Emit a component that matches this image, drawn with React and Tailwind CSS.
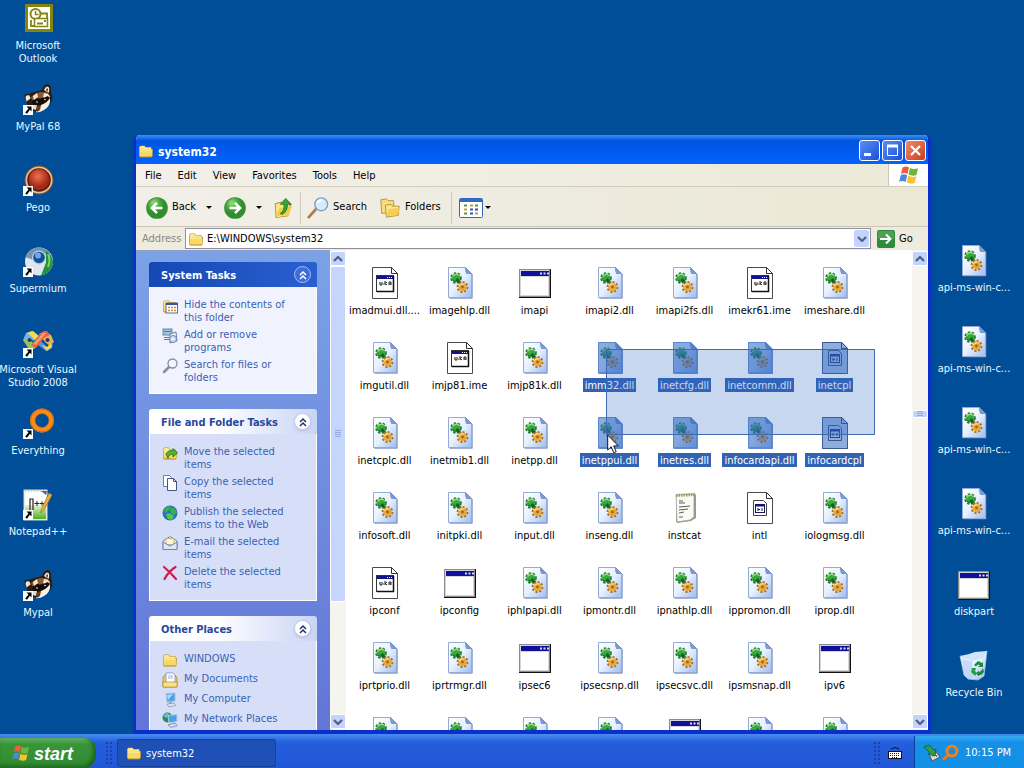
import { useState } from 'react';

const DESKTOP_LEFT = [
  { icon: 'outlook', lines: ['Microsoft', 'Outlook'] },
  { icon: 'raccoon', lines: ['MyPal 68'] },
  { icon: 'pego', lines: ['Pego'] },
  { icon: 'supermium', lines: ['Supermium'] },
  { icon: 'vs', lines: ['Microsoft Visual', 'Studio 2008'] },
  { icon: 'everything', lines: ['Everything'] },
  { icon: 'npp', lines: ['Notepad++'] },
  { icon: 'raccoon', lines: ['Mypal'] },
];

const DESKTOP_RIGHT = [
  { icon: 'dll', lines: ['api-ms-win-c...'] },
  { icon: 'dll', lines: ['api-ms-win-c...'] },
  { icon: 'dll', lines: ['api-ms-win-c...'] },
  { icon: 'dll', lines: ['api-ms-win-c...'] },
  { icon: 'exe', lines: ['diskpart'] },
  { icon: 'bin', lines: ['Recycle Bin'] },
];

const FILES = [
  ['imadmui.dll....', 'conf'], ['imagehlp.dll', 'dll'], ['imapi', 'exe'], ['imapi2.dll', 'dll'], ['imapi2fs.dll', 'dll'], ['imekr61.ime', 'conf'], ['imeshare.dll', 'dll'],
  ['imgutil.dll', 'dll'], ['imjp81.ime', 'conf'], ['imjp81k.dll', 'dll'], ['imm32.dll', 'dll', true], ['inetcfg.dll', 'dll', true], ['inetcomm.dll', 'dll', true], ['inetcpl', 'cpl', true],
  ['inetcplc.dll', 'dll'], ['inetmib1.dll', 'dll'], ['inetpp.dll', 'dll'], ['inetppui.dll', 'dll', true], ['inetres.dll', 'dll', true], ['infocardapi.dll', 'dll', true], ['infocardcpl', 'cpl', true],
  ['infosoft.dll', 'dll'], ['initpki.dll', 'dll'], ['input.dll', 'dll'], ['inseng.dll', 'dll'], ['instcat', 'text'], ['intl', 'cpl'], ['iologmsg.dll', 'dll'],
  ['ipconf', 'conf'], ['ipconfig', 'exe'], ['iphlpapi.dll', 'dll'], ['ipmontr.dll', 'dll'], ['ipnathlp.dll', 'dll'], ['ippromon.dll', 'dll'], ['iprop.dll', 'dll'],
  ['iprtprio.dll', 'dll'], ['iprtrmgr.dll', 'dll'], ['ipsec6', 'exe'], ['ipsecsnp.dll', 'dll'], ['ipsecsvc.dll', 'dll'], ['ipsmsnap.dll', 'dll'], ['ipv6', 'exe'],
  ['', 'dll'], ['', 'dll'], ['', 'dll'], ['', 'dll'], ['', 'exe'], ['', 'dll'], ['', 'dll'],
];

const PANELS = [
  {
    title: 'System Tasks',
    primary: true,
    items: [
      ['hide', 'Hide the contents of', 'this folder'],
      ['programs', 'Add or remove', 'programs'],
      ['search', 'Search for files or', 'folders'],
    ],
  },
  {
    title: 'File and Folder Tasks',
    items: [
      ['move', 'Move the selected', 'items'],
      ['copy', 'Copy the selected', 'items'],
      ['globe', 'Publish the selected', 'items to the Web'],
      ['mail', 'E-mail the selected', 'items'],
      ['delete', 'Delete the selected', 'items'],
    ],
  },
  {
    title: 'Other Places',
    items: [
      ['folder', 'WINDOWS'],
      ['docs', 'My Documents'],
      ['computer', 'My Computer'],
      ['network', 'My Network Places'],
    ],
  },
];

const MENU = ['File', 'Edit', 'View', 'Favorites', 'Tools', 'Help'];

function Gears() {
  return (
    <>
      <circle cx="12" cy="11" r="4.600" fill="none" stroke="#1d7a2c" strokeWidth="2.400" strokeDasharray="2.200 1.600" />
      <circle cx="12" cy="11" r="4.400" fill="#3aa83c" />
      <path d="M8.500 9.500Q11 6 15 8" stroke="#8be07a" strokeWidth="1.500" fill="none" />
      <path d="M12.500 12l4 4.500" stroke="#12602a" strokeWidth="3" />
      <path d="M9 13l2.500 1.500" stroke="#1a6d2c" strokeWidth="1.200" />
      <circle cx="18.500" cy="20" r="4.700" fill="none" stroke="#a8701c" strokeWidth="2.400" strokeDasharray="2 1.600" />
      <circle cx="18.500" cy="20" r="4.300" fill="#eba73a" />
      <circle cx="18.500" cy="20" r="1.400" fill="#8c6a34" />
      <path d="M15 19q2-3 5-2" stroke="#ffd777" strokeWidth="1.300" fill="none" />
    </>
  );
}

function DllIcon({ selected }) {
  return (
    <>
      <path d="M5.500 1.500h17l6 6v24h-23z" fill="#4f69ad" />
      <path d="M4.500.500h17l6 6v24h-23z" fill="url(#paper)" stroke="#93abd6" />
      <path d="M21.500.500l6 6h-5q-1-2-1-6z" fill="#7c9ad6" stroke="#6d88c4" strokeWidth=".8" />
      <Gears />
      {selected && <path d="M4 0h18l7 7v25H4z" fill="#316ac5" opacity=".55" />}
    </>
  );
}

function ConfIcon() {
  return (
    <>
      <path d="M3.500.500h19l6 6v25h-25z" fill="#fff" stroke="#4a4a4a" />
      <path d="M22.500.500v6h6z" fill="#fff" stroke="#333" />
      <rect x="7.500" y="8.500" width="17" height="16" fill="#fff" stroke="#333" />
      <path d="M24.500 9v15.500H8" fill="none" stroke="#111" strokeWidth="1.500" />
      <rect x="8" y="9" width="16" height="3" fill="#12128c" />
      <path d="M18 10.500h1M20 10.500h1M22 10.500h1" stroke="#fff" />
      <path d="M11 15v3h2v-3M16 14v4M18 15l-2 1.500 2 1.500M20 18v-3h2v3M20 17h2" stroke="#222" fill="none" />
      <path d="M10 16h1M14 17h1" stroke="#b02020" />
    </>
  );
}

function CplIcon({ selected }) {
  return (
    <>
      <path d="M3.500.500h19l6 6v25h-25z" fill="#fff" stroke="#4a4a4a" />
      <path d="M22.500.500v6h6z" fill="#fff" stroke="#333" />
      <path d="M9.500 8.500h10l3 3v12h-13z" fill="#fff" stroke="#444" />
      <rect x="11.500" y="12.500" width="9" height="8" fill="#fff" stroke="#17175e" />
      <path d="M11 13.500h10" stroke="#12128c" strokeWidth="2" />
      <path d="M14 16v3M14 17.500h2M18 16v3" stroke="#17175e" />
      {selected && <path d="M3 0h20l6 6v26H3z" fill="#316ac5" opacity=".55" />}
    </>
  );
}

function ExeIcon() {
  return (
    <>
      <rect x="0" y="2" width="32" height="29" fill="#111" />
      <rect x="0" y="2" width="31" height="28" fill="#8b8b8b" />
      <rect x="1" y="3" width="29" height="26" fill="#d6d6d6" />
      <rect x="2" y="4" width="28" height="5" fill="#10109c" />
      <rect x="2" y="10" width="27" height="18" fill="#fff" />
      <path d="M21 6.500h2M24.500 6.500h2M28 6.500h2" stroke="#dcdcdc" strokeWidth="2" />
    </>
  );
}

function TextIcon() {
  return (
    <>
      <path d="M8 3l18-1 1 1v23l-5 3-14 2-1-2z" fill="#9a9a92" />
      <path d="M7 3l18-1v23l-4 3-13 2z" fill="#fbfbf6" stroke="#9b9b90" strokeWidth=".8" />
      <path d="M7 3.500l19-1" stroke="#9d9762" strokeWidth="3" strokeDasharray="1.500 1" />
      <path d="M10 9h4M10 11h6M10 15l11-1M10 18l9-1M10 21l5-1M10 25h4" stroke="#5c5c5c" />
    </>
  );
}

function Raccoon() {
  return (
    <>
      <path d="M3 15q-2-6 4-5l5-2 8-2q2-6 6-6 4 2 3 8 3 7-1 12-5 6-13 8-8-1-10-9z" fill="#2e1b12" />
      <path d="M3.500 13.500q0-3 4-2l1 3-4 3z" fill="#efe6d8" />
      <path d="M22 6q2-5 4.500-3 1.500 2 0 6z" fill="#f1e9dd" />
      <path d="M24 6q1-3 2-1l-.500 3z" fill="#59311d" />
      <path d="M9 13q6-5 11-5 4 0 7 2l-4 3-7 2-6 1z" fill="#8a5a38" />
      <path d="M11 12l4-3 1 4-4 3z" fill="#f3e7d3" />
      <path d="M22 9q5 0 6 4l-3 2-4-2z" fill="#f3e7d3" />
      <path d="M10 18l5-4 4 1 7-3 2 3-5 5-6 2-5 2z" fill="#140c08" />
      <path d="M19 21q6-2 9-7 1 8-6 12-5 3-8 2z" fill="#f8f1e4" />
      <path d="M10 21l5 0-1 5-3-1z" fill="#e9dbc4" />
      <circle cx="15" cy="18" r=".8" fill="#fff" />
      <circle cx="23" cy="15.500" r=".8" fill="#fff" />
      <path d="M15 22l4-1-1 5-3 2z" fill="#6b3a20" />
    </>
  );
}

function ShortcutArrow() {
  return (
    <>
      <rect x="1" y="21" width="10" height="10" fill="#fff" />
      <path d="M4.500 22.500h5v5l-1.700-1.700-2.800 4-1.800-1.400 3.300-4z" fill="#000" />
    </>
  );
}

function BigIcon({ name, selected }) {
  const shortcut = ['raccoon', 'pego', 'supermium', 'vs', 'everything', 'npp'].includes(name);
  return (
    <svg width="32" height="32" viewBox="0 0 32 32" aria-hidden="true" className="block shrink-0">
      {name === 'dll' && <DllIcon selected={selected} />}
      {name === 'conf' && <ConfIcon />}
      {name === 'cpl' && <CplIcon selected={selected} />}
      {name === 'exe' && <ExeIcon />}
      {name === 'text' && <TextIcon />}
      {name === 'raccoon' && <Raccoon />}
      {name === 'outlook' && (
        <>
          <rect x="3" y="1" width="28" height="28" fill="#85840f" />
          <rect x="6" y="4" width="22" height="22" fill="#fff" />
          <circle cx="13.500" cy="11" r="5" fill="#fff" stroke="#85840f" strokeWidth="2" />
          <path d="M13.500 8v3.500h3" stroke="#85840f" strokeWidth="1.500" fill="none" />
          <path d="M9 17v6h4M19 10.500h6V15" fill="none" stroke="#85840f" strokeWidth="1.800" />
          <rect x="12.500" y="15.500" width="13" height="8" fill="#fff" stroke="#85840f" strokeWidth="1.500" />
          <path d="M15 20.500h6M22 18h2" stroke="#85840f" strokeWidth="1.800" />
        </>
      )}
      {name === 'pego' && (
        <>
          <circle cx="17" cy="15" r="14.500" fill="#7b4a2c" />
          <circle cx="17" cy="15" r="13.500" fill="#e3c095" />
          <circle cx="17" cy="15" r="11.800" fill="#5b1a0e" />
          <circle cx="17" cy="14.500" r="10.500" fill="url(#redball)" />
        </>
      )}
      {name === 'supermium' && (
        <>
          <circle cx="17" cy="15.500" r="14" fill="#dfe6ee" />
          <path d="M3.500 11Q8 1 18 1.500q8 1 11 7l-13 0-6 5z" fill="#6f93b4" />
          <path d="M24 5q7 4 7 12-2 11-12 12.500l5-13z" fill="#23913b" />
          <path d="M26 8q3 6 0 13" stroke="#7ad46d" strokeWidth="2" fill="none" />
          <circle cx="17" cy="11.500" r="7" fill="#b9d2e6" />
          <circle cx="17" cy="11.500" r="5.800" fill="#14509c" />
          <circle cx="16" cy="9.500" r="3" fill="#70a9e5" />
        </>
      )}
      {name === 'vs' && (
        <>
          <path d="M1 13l3-7 6-2 6 5-4 5-4-2-3 4z" fill="#77aef0" />
          <path d="M5 6l6-2 6 5-4 4-4-4z" fill="#f0dd4d" />
          <path d="M1 13l5 8 6 1 4-4-6-3-3-4z" fill="#9ac34f" />
          <path d="M17 7l6-3 6 4 3 7-4 4-5-4z" fill="#f2b04a" />
          <path d="M19 14l6 6 6-5-1 6-6 3-8-6z" fill="#5c92e0" />
          <path d="M20 18l5 2 4-4 1 4-5 4z" fill="#f3d84c" />
          <path d="M9 18L20 5l5-1 3 4-6 3-8 10z" fill="#e9633a" />
          <path d="M11 17L21 6l3 0-10 12z" fill="#f69a72" />
          <circle cx="7.500" cy="13" r="2" fill="#123c80" />
          <circle cx="25.500" cy="13" r="2" fill="#123c80" />
        </>
      )}
      {name === 'everything' && (
        <>
          <circle cx="20" cy="12.500" r="9.500" fill="none" stroke="#ff8a14" strokeWidth="5" />
          <circle cx="20" cy="12.500" r="11.500" fill="none" stroke="#c76a18" />
          <circle cx="20" cy="12.500" r="7" fill="none" stroke="#c76a18" strokeWidth=".8" />
        </>
      )}
      {name === 'npp' && (
        <>
          <rect x="2" y="1" width="23" height="30" fill="#fff" stroke="#cfd8cf" />
          <rect x="3" y="16" width="21" height="14" fill="url(#grass)" />
          <path d="M3 2h20" stroke="#aab" strokeDasharray="1.500 1.500" />
          <path d="M8 21V10h3v11" stroke="#222" fill="none" strokeWidth="1.200" />
          <path d="M12.500 14.500h5M15 12v5M18 14.500h4M20 12.500v4" stroke="#222" />
          <path d="M19 21L27 4l3 2-8 15-3 3z" fill="#e9b13b" stroke="#9b7423" strokeWidth=".7" />
          <path d="M19 2h6l-1 4z" fill="#5560a8" />
        </>
      )}
      {name === 'bin' && (
        <>
          <path d="M2 6l12 4L29 1l-3 25-6 4-10-1-4-4z" fill="url(#paper)" stroke="#9cc0ea" strokeWidth=".8" />
          <path d="M2 6l9-2 6-2 12-1-4 7-11 3z" fill="#cfe4fa" />
          <path d="M4 8.500l10 3 1 18-5-1-4-3z" fill="#b3d0f4" opacity=".7" />
          <path d="M16 15l4-4 4 2 1-1v5h-5l2-1.500-2-1-2 2z" fill="#1e8a3a" />
          <path d="M14 18h4l-1 3 2 2-2 3-4-4z" fill="#2a9d48" />
          <path d="M25 18l1 4-3 3h-2v1.500l-3-3 3-3V22l2-1z" fill="#1e8a3a" />
        </>
      )}
      {shortcut && <ShortcutArrow />}
    </svg>
  );
}

function FolderShape() {
  return (
    <>
      <path d="M1 4l1.500-1.500h4L8 4h5.500v2H15l-.500 7.500-1 1H2L1 13z" fill="#b58a1f" />
      <path d="M1.500 4.200L2.700 3h3.600l1.400 1.500H13v2H1.500z" fill="#ffe98f" />
      <path d="M1.500 6.500h12.800v6.200L13 13.500H2.200l-.700-.700z" fill="#f9d866" />
      <path d="M2 7h11.500" stroke="#fff6c2" />
    </>
  );
}

function SmallIcon({ name }) {
  return (
    <svg viewBox="0 0 16 16" aria-hidden="true" className="block size-4 shrink-0">
      {name === 'folder' && <FolderShape />}
      {name === 'hide' && (
        <>
          <FolderShape />
          <rect x="4" y="5" width="11.500" height="10" fill="#fff" stroke="#5a6c94" />
          <path d="M4 6h11.500" stroke="#39539b" strokeWidth="2" />
          <path d="M6 9.500h2M9 9.500h2M12 9.500h2M6 12.500h2M9 12.500h2M12 12.500h2" stroke="#d08a4b" strokeWidth="1.500" />
        </>
      )}
      {name === 'programs' && (
        <>
          <rect x="1" y="1" width="9" height="6" fill="#9cc4da" stroke="#6689a4" />
          <path d="M2 3.500h7M2 9.500h6M2 11.500h6" stroke="#4f7f9d" />
          <path d="M8 6l6-2 1 9-7 2z" fill="#e6eefa" stroke="#6a82ad" />
          <circle cx="11" cy="11" r="3.500" fill="#cfdcf5" stroke="#7488b4" />
          <circle cx="11" cy="11" r="1" fill="#fff" />
        </>
      )}
      {name === 'search' && (
        <>
          <path d="M2 14l5-5" stroke="#8c8a96" strokeWidth="2.500" strokeLinecap="round" />
          <circle cx="10.500" cy="5.500" r="4.500" fill="#eef6ff" stroke="#848da6" strokeWidth="1.300" />
          <path d="M8.500 4.500q1-2 3-1.500" stroke="#fff" fill="none" />
        </>
      )}
      {name === 'move' && (
        <>
          <FolderShape />
          <path d="M4 9q3-5 7-3V3.500l4.500 4.500-4.500 4V9.500q-4-1-5 4z" fill="#52b52d" stroke="#1f6d16" strokeWidth=".8" />
        </>
      )}
      {name === 'copy' && (
        <>
          <path d="M1.500.500h6l2 2v9h-8z" fill="#fff" stroke="#6c7fa8" />
          <path d="M5.500 3.500h6l3 3v9h-9z" fill="#fff" stroke="#40587f" />
          <path d="M11.500 3.500v3h3" fill="none" stroke="#40587f" />
        </>
      )}
      {name === 'globe' && (
        <>
          <circle cx="8" cy="8" r="7.500" fill="#2d6fb9" />
          <path d="M1.500 5q3-4 7-4l-1 4-4 3zM9 2l4 2 2 4-4 2-3-4z" fill="#3cae46" />
          <path d="M4 9l4-1 4 3-2 4-4-1z" fill="#4fc94a" />
        </>
      )}
      {name === 'mail' && (
        <>
          <path d="M1 6l7-4.500 7 4.500v8.500H1z" fill="#fbf6ea" stroke="#7486ae" />
          <path d="M4 3.500h8v6H4z" fill="#fff6d6" stroke="#b39c68" strokeWidth=".7" />
          <path d="M1 7l7 4 7-4v7.500H1z" fill="#dce6f8" stroke="#7486ae" />
        </>
      )}
      {name === 'delete' && <path d="M2 2q6 5 12 12M13.500 2Q7 6 2.500 14" stroke="#c9204a" strokeWidth="2.200" fill="none" strokeLinecap="round" />}
      {name === 'docs' && (
        <>
          <path d="M1 5l2-2h10l2 3v9H1z" fill="#f3cf5c" stroke="#a9821e" strokeWidth=".8" />
          <path d="M4 1h7l2 2v8H4z" fill="#fff" stroke="#7e8fb5" strokeWidth=".8" />
          <path d="M6 4h5M6 6h5" stroke="#9db0d8" />
          <path d="M1 10h14v5H1z" fill="#fbe08a" stroke="#a9821e" strokeWidth=".6" />
        </>
      )}
      {name === 'computer' && (
        <>
          <path d="M4 1.500l9-.500v8l-8 1z" fill="#49a4ea" stroke="#b2bfd6" />
          <path d="M5 3l6-1-5 6z" fill="#a8dcff" />
          <path d="M7 10h3v2H7z" fill="#8ea0bf" />
          <path d="M5 12l7-1 2 2.500L7 15z" fill="#dbe3f0" stroke="#8497bb" strokeWidth=".7" />
        </>
      )}
      {name === 'network' && (
        <>
          <circle cx="5.500" cy="5.500" r="5" fill="#2f8a54" />
          <path d="M1 4q4-4 6-3l-2 5z" fill="#69b6e8" />
          <path d="M6 3.500l9-1v7l-8 1.500z" fill="#40a5ea" stroke="#c1cbe0" />
          <path d="M6 13l7-2 2 2.500-6 2z" fill="#dbe3f0" stroke="#60749e" strokeWidth=".7" />
        </>
      )}
    </svg>
  );
}

function Flag({ className }) {
  return (
    <svg viewBox="0 0 20 18" aria-hidden="true" className={`block shrink-0 ${className}`}>
      <path d="M3.500 1.500Q7-.500 10 1.500L8.500 8Q5.500 6.200 2 8z" fill="#e8613a" />
      <path d="M11 2q3.500 2 8 .300L17.500 9q-4 1.500-8-.500z" fill="#6fb53c" />
      <path d="M1.700 9.200Q5 7.500 8.200 9.300L6.700 16Q3.500 14 .200 15.700z" fill="#4f86e0" />
      <path d="M9.200 9.800q4 2 8 .500L15.800 17q-4 1.500-8-.500z" fill="#f5c32f" />
    </svg>
  );
}

function Chevron({ dir }) {
  return (
    <svg viewBox="0 0 10 6" aria-hidden="true" className="block h-1.5 w-2.5">
      <path d={dir === 'up' ? 'M1 5l4-4 4 4' : 'M1 1l4 4 4-4'} fill="none" stroke="#4d6185" strokeWidth="2.200" />
    </svg>
  );
}

function ScrollBar({ children }) {
  const button = 'flex h-[15px] w-full shrink-0 items-center justify-center rounded-xs border border-white bg-[#c3d3fb]';
  return (
    <div className="flex w-4 shrink-0 flex-col bg-[#f5f4ef] py-px">
      <button type="button" aria-label="Scroll up" className={button}><Chevron dir="up" /></button>
      <div className="flex min-h-0 flex-1 flex-col">{children}</div>
      <button type="button" aria-label="Scroll down" className={button}><Chevron dir="down" /></button>
    </div>
  );
}

function Grip() {
  return (
    <div className="flex flex-col gap-px">
      {[0, 1, 2, 3].map(i => <span key={i} className="h-px w-1.5 bg-[#93a9de]" />)}
    </div>
  );
}

function DropArrow() {
  return (
    <span className="flex h-3 items-center">
      <span className="size-0 border-x-[3px] border-t-[3px] border-x-transparent border-t-black" />
    </span>
  );
}

function RoundArrow({ flip }) {
  return (
    <svg viewBox="0 0 24 24" aria-hidden="true" className="block size-[22px]">
      <circle cx="12" cy="12" r="11.800" fill="#3b8a38" />
      <circle cx="12" cy="12" r="10.800" fill="url(#greenball)" />
      <path d={flip ? 'M6 12h11M12 6.500l5.500 5.500-5.500 5.500' : 'M18 12H7M12 6.500L6.500 12l5.500 5.500'} fill="none" stroke="#fff" strokeWidth="2.800" />
    </svg>
  );
}

function TaskPanel({ panel }) {
  const [open, setOpen] = useState(true);
  return (
    <section>
      <h2 className={`flex h-[25px] items-center justify-between rounded-t-[3px] pr-1.5 pl-3 font-bold ${panel.primary ? 'bg-linear-to-r from-[#1548b4] to-[#2a5fd0] text-white' : 'bg-linear-to-r from-white from-40% to-[#c9d4f6] text-[#27479c]'}`}>
        <span className="pt-1">{panel.title}</span>
        <button type="button" aria-label={`Toggle ${panel.title}`} aria-expanded={open} onClick={() => setOpen(!open)}
          className={`flex size-[17px] items-center justify-center rounded-full border ${panel.primary ? 'border-[#a9c1f3] bg-[#3d6dd6]' : 'border-[#c3cce4] bg-white shadow-sm'}`}>
          <svg viewBox="0 0 10 10" aria-hidden="true" className="block size-2.5">
            <path d="M2 5l3-3 3 3M2 9l3-3 3 3" fill="none" stroke={panel.primary ? '#fff' : '#203070'} strokeWidth="1.500" />
          </svg>
        </button>
      </h2>
      {open && (
        <ul className={`flex flex-col gap-1 border border-t-0 border-white px-3 pt-[11px] pb-[9px] ${panel.primary ? 'bg-[#f0f3fd]' : 'bg-[#d6dff7]'}`}>
          {panel.items.map(([icon, ...lines]) => (
            <li key={icon}>
              <a href="#" className="flex gap-1.5 leading-[13px] text-[#3a5fb4]">
                <SmallIcon name={icon} />
                <span>{lines.map(l => <span key={l} className="block whitespace-nowrap">{l}</span>)}</span>
              </a>
            </li>
          ))}
        </ul>
      )}
    </section>
  );
}

function DesktopItem({ item }) {
  return (
    <button type="button" className="flex h-[81px] w-full flex-col items-center gap-1 leading-[13px] text-[#eaf8ff]">
      <BigIcon name={item.icon} />
      <span>{item.lines.map(l => <span key={l} className="block whitespace-nowrap">{l}</span>)}</span>
    </button>
  );
}

function FileItem({ file: [name, icon, selected] }) {
  return (
    <button type="button" className="flex h-[75px] flex-col items-center gap-1 leading-[13px]">
      <BigIcon name={icon} selected={selected} />
      {name && <span className={`whitespace-nowrap px-0.5 pt-px ${selected ? 'bg-[#3162b4] text-white' : 'text-black'}`}>{name}</span>}
    </button>
  );
}

function Toolbar() {
  return (
    <div className="flex h-10 shrink-0 items-center border-b border-[#c9c6b5] bg-linear-to-r from-[#f1efe8] to-[#ebe8d6] pt-0.5 pl-2.5">
      <button type="button" className="flex items-center gap-1"><RoundArrow />Back</button>
      <button type="button" aria-label="Back history" className="px-2.5 py-2"><DropArrow /></button>
      <button type="button" aria-label="Forward" className="ml-0.5"><RoundArrow flip /></button>
      <button type="button" aria-label="Forward history" className="py-2 pr-2 pl-2.5"><DropArrow /></button>
      <button type="button" aria-label="Up" className="ml-0.5">
        <svg viewBox="0 0 24 24" aria-hidden="true" className="block size-[22px]">
          <path d="M3 7l7-2 2 2h9l-3 14-14 2z" fill="#b58f2c" />
          <path d="M4 8l6-2 2 2h7v12l-14 2z" fill="#fbe68c" />
          <path d="M4 21l4-9 14-2-4 10z" fill="#f3ce4e" />
          <path d="M9 18q5-3 4-10H9l6-6.500L21 8h-4q0 8-6 11z" fill="#38a52e" stroke="#1c6e1b" strokeWidth=".8" />
        </svg>
      </button>
      <span className="mx-1.5 h-8 w-px bg-[#cbc8b8]" />
      <button type="button" className="flex items-center gap-1">
        <svg viewBox="0 0 24 24" aria-hidden="true" className="block size-[22px]">
          <path d="M2 22l8-9" stroke="#b5794a" strokeWidth="3" strokeLinecap="round" />
          <circle cx="15.500" cy="8" r="7" fill="#d5ecfc" stroke="#7f9cc4" strokeWidth="1.500" />
          <path d="M11.500 6.500q1-3 5-3" stroke="#fff" strokeWidth="2" fill="none" />
        </svg>
        Search
      </button>
      <button type="button" className="ml-3 flex items-center gap-1">
        <svg viewBox="0 0 24 24" aria-hidden="true" className="block size-[22px]">
          <path d="M2 3l6-1 2 2h6v12l-13 2z" fill="#f7dd7c" stroke="#b4912f" />
          <path d="M7 9l6-1 2 2h7l-1 10-13 2z" fill="#fbe590" stroke="#b4912f" />
          <path d="M8 21l3-8 12-1-3 8z" fill="#f5cf55" />
        </svg>
        Folders
      </button>
      <span className="mr-[7px] ml-2.5 h-8 w-px bg-[#cbc8b8]" />
      <button type="button" aria-label="Views" className="flex items-center gap-0.5">
        <svg viewBox="0 0 24 20" aria-hidden="true" className="block h-5 w-6">
          <rect x=".500" y=".500" width="23" height="19" rx="1" fill="#fff" stroke="#3067b8" />
          <path d="M1 2.500h22" stroke="#2f6bc5" strokeWidth="3" />
          <path d="M5 7.500h3M16 7.500h3M5 15.500h3" stroke="#4a9c46" strokeWidth="2" />
          <path d="M11 7.500h3M5 11.500h3M16 15.500h3" stroke="#c8993f" strokeWidth="2" />
          <path d="M11 11.500h3M16 11.500h3M11 15.500h3" stroke="#3a4fa8" strokeWidth="2" />
        </svg>
        <DropArrow />
      </button>
    </div>
  );
}

function ExplorerWindow() {
  const [path, setPath] = useState('E:\\WINDOWS\\system32');
  const control = 'flex size-[21px] items-center justify-center rounded-[3px] border border-white';
  return (
    <main className="absolute top-[135px] right-[93px] bottom-0 left-[133px] flex flex-col overflow-hidden rounded-t-md border-x-[3px] border-b-4 border-[#0a2fcb] bg-[#ece9d8]">
      {/* Title bar */}
      <header className="flex h-[29px] shrink-0 items-center gap-1 bg-linear-to-b from-[#3c8cf6] via-[#0054e3] via-20% to-[#0463fb] px-0.5 pt-0.5">
        <SmallIcon name="folder" />
        <h1 className="flex-1 pt-0.5 text-[12px] font-bold text-white">system32</h1>
        <div className="flex gap-0.5">
          <button type="button" aria-label="Minimize" className={`${control} bg-linear-to-br from-[#5a8cf5] to-[#1c4fd6]`}>
            <svg viewBox="0 0 15 15" aria-hidden="true" className="block size-[15px]"><rect x="2" y="10" width="7" height="3" fill="#fff" /></svg>
          </button>
          <button type="button" aria-label="Maximize" className={`${control} bg-linear-to-br from-[#5a8cf5] to-[#1c4fd6]`}>
            <svg viewBox="0 0 15 15" aria-hidden="true" className="block size-[15px]"><path d="M2.500 3v9.500h10V3" fill="none" stroke="#fff" /><path d="M2 3h11" stroke="#fff" strokeWidth="3" /></svg>
          </button>
          <button type="button" aria-label="Close" className={`${control} bg-linear-to-br from-[#ee8a6a] to-[#cc3a12]`}>
            <svg viewBox="0 0 15 15" aria-hidden="true" className="block size-[15px]"><path d="M3 3l9 9M12 3l-9 9" stroke="#fff" strokeWidth="2.200" /></svg>
          </button>
        </div>
      </header>

      {/* Menu */}
      <nav className="flex h-[23px] shrink-0 items-stretch border-b border-[#d0cdbd] bg-linear-to-r from-[#f3f0ea] to-[#ece9d8] pl-px">
        {MENU.map(m => <button key={m} type="button" className="px-2 pt-0.5">{m}</button>)}
        <span className="flex-1" />
        <span className="flex w-10 items-center justify-center border-l border-[#c9c6b5] bg-white">
          <Flag className="h-[18px] w-5" />
        </span>
      </nav>

      <Toolbar />

      {/* Address bar */}
      <div className="flex h-[23px] shrink-0 items-center bg-[#efecdf] pl-1.5">
        <label htmlFor="address" className="w-[43px] pt-0.5 text-[#8a887c]">Address</label>
        <div className="flex h-[21px] flex-1 items-center gap-[3px] border border-[#8d8f9b] bg-white pr-px pl-0.5">
          <SmallIcon name="folder" />
          <input id="address" value={path} onChange={e => setPath(e.target.value)} className="min-w-0 flex-1 pt-0.5 outline-none" />
          <button type="button" aria-label="Address list" className="flex h-[17px] w-[15px] items-center justify-center rounded-xs bg-[#c3d3fb]"><Chevron dir="down" /></button>
        </div>
        <button type="button" className="flex w-[57px] items-center gap-1 pl-1.5">
          <svg viewBox="0 0 18 18" aria-hidden="true" className="block size-[18px]">
            <rect width="18" height="18" rx="2" fill="#2f8a3c" />
            <rect x="1" y="1" width="16" height="8" rx="1" fill="#58ab5c" opacity=".7" />
            <path d="M3 9h10M9 4.500L13.500 9 9 13.500" stroke="#fff" strokeWidth="2" fill="none" />
          </svg>
          <span className="pt-0.5">Go</span>
        </button>
      </div>

      {/* Body */}
      <div className="flex min-h-0 flex-1">
        <aside className="flex w-[194px] shrink-0 flex-col gap-[15px] overflow-hidden border-t border-[#8f9ec5] bg-linear-to-b from-[#7ba2e7] to-[#6375d6] px-[13px] pt-[11px]">
          {PANELS.map(p => <TaskPanel key={p.title} panel={p} />)}
        </aside>
        <ScrollBar>
          <div className="flex flex-[335_0_0px] items-center justify-center rounded-xs border border-white bg-[#c6d5fb]"><Grip /></div>
          <div className="flex-[113_0_0px]" />
        </ScrollBar>
        <div className="relative grid min-w-0 flex-1 auto-rows-[75px] grid-cols-[repeat(auto-fill,75px)] content-start overflow-hidden bg-white pt-[17px] pl-px">
          {FILES.map((f, i) => <FileItem key={i} file={f} />)}
          <div className="absolute top-[99px] left-[260px] h-[86px] w-[269px] border border-[#3f6cb0] bg-[#316ac5]/27" />
          <svg viewBox="0 0 12 20" aria-hidden="true" className="absolute top-[184px] left-[261px] h-5 w-3">
            <path d="M.700 1v15l3.500-3.300 2.500 6 2.500-1-2.500-5.800h4.600z" fill="#fff" stroke="#000" strokeWidth=".9" />
          </svg>
        </div>
        <ScrollBar>
          <div className="flex-[144_0_0px]" />
          <div className="flex h-2 items-center justify-center overflow-hidden rounded-xs border border-white bg-[#c3d3fb]"><Grip /></div>
          <div className="flex-[296_0_0px]" />
        </ScrollBar>
      </div>
    </main>
  );
}

function BarGrip() {
  return (
    <span className="grid grid-cols-2 gap-0.5" aria-hidden="true">
      {Array.from({ length: 12 }, (_, i) => <span key={i} className="size-0.5 bg-[#1943a8]" />)}
    </span>
  );
}

function Taskbar() {
  return (
    <footer className="flex h-[34px] shrink-0 items-end bg-linear-to-b from-[#4a8cf2] via-[#245edb] via-25% to-[#2157d7] text-white">
      <button type="button" className="flex h-[30px] w-24 items-center gap-1 rounded-r-xl bg-linear-to-b from-[#63b663] via-[#3a943a] via-20% to-[#2f8a2f] pl-3 shadow-[inset_-3px_-2px_4px_#1d621d]">
        <Flag className="h-4 w-[18px]" />
        <span className="pt-0.5 font-['Liberation_Sans',sans-serif] text-[18px] leading-5 font-bold italic">start</span>
      </button>
      <div className="flex h-[30px] flex-1 items-center">
        <span className="flex w-[21px] justify-center pl-1"><BarGrip /></span>
        <button type="button" className="flex h-7 w-[159px] items-center gap-1 rounded-xs border border-[#17429c] bg-[#1e50b6] pl-2">
          <SmallIcon name="folder" />
          <span className="pt-0.5">system32</span>
        </button>
        <span className="flex-1" />
        <BarGrip />
        <svg viewBox="0 0 14 14" aria-hidden="true" className="mr-3 ml-2 block size-3.5">
          <path d="M3 3q4-3 8 0" stroke="#111" fill="none" />
          <rect x=".500" y="5.500" width="13" height="7" fill="#fff" stroke="#111" />
          <path d="M2 7.500h10M2 9.500h10M4 11.500h6" stroke="#222" strokeDasharray="1 1" />
        </svg>
      </div>
      <div className="flex h-8 w-[110px] items-center border-l border-[#0c3f94] bg-linear-to-b from-[#35aaf3] via-[#1590e8] via-20% to-[#1290e6] pt-0.5 pl-2">
        <svg viewBox="0 0 18 18" aria-hidden="true" className="block size-[18px]">
          <path d="M6 9l7-1 4 5-8 4z" fill="#e3e3da" stroke="#555" />
          <path d="M9 12l4-1 1 2" stroke="#555" fill="none" />
          <path d="M1 3l5-2 5 5 2-1-1 7-7-2 2-1z" fill="#2f9d45" stroke="#155c25" strokeWidth=".8" />
        </svg>
        <svg viewBox="0 0 18 18" aria-hidden="true" className="block size-[18px]">
          <path d="M7 11l-5 5" stroke="#e87a1a" strokeWidth="3" />
          <circle cx="11" cy="7" r="5" fill="none" stroke="#f0811c" strokeWidth="3" />
          <circle cx="11" cy="7" r="1" fill="#b85c12" />
        </svg>
        <time className="ml-1.5 pt-px whitespace-nowrap">10:15 PM</time>
      </div>
    </footer>
  );
}

export default function App() {
  return (
    <div className="flex h-screen flex-col overflow-hidden bg-[#004e98] font-['DejaVu_Sans_Condensed','DejaVu_Sans',sans-serif] text-[11px]">
      <svg width="0" height="0" className="absolute" aria-hidden="true">
        <defs>
          <linearGradient id="paper" x1="0" y1="0" x2="1" y2="1">
            <stop offset="0" stopColor="#fff" /><stop offset=".5" stopColor="#e6f0fe" /><stop offset="1" stopColor="#9dbcf0" />
          </linearGradient>
          <linearGradient id="grass" x1="0" y1="0" x2="0" y2="1">
            <stop offset="0" stopColor="#e6f7c8" /><stop offset="1" stopColor="#4fae1f" />
          </linearGradient>
          <radialGradient id="redball" cx=".45" cy=".35">
            <stop offset="0" stopColor="#f0714f" /><stop offset="1" stopColor="#a32a16" />
          </radialGradient>
          <radialGradient id="greenball" cx=".35" cy=".25">
            <stop offset="0" stopColor="#9fdc84" /><stop offset=".6" stopColor="#45ab3a" /><stop offset="1" stopColor="#2f8f2d" />
          </radialGradient>
        </defs>
      </svg>
      <div className="relative min-h-0 flex-1">
        <div className="absolute top-[3px] left-0 w-[76px]">
          {DESKTOP_LEFT.map((d, i) => <DesktopItem key={i} item={d} />)}
        </div>
        <div className="absolute top-[245px] right-2.5 w-20">
          {DESKTOP_RIGHT.map((d, i) => <DesktopItem key={i} item={d} />)}
        </div>
        <ExplorerWindow />
      </div>
      <Taskbar />
    </div>
  );
}
